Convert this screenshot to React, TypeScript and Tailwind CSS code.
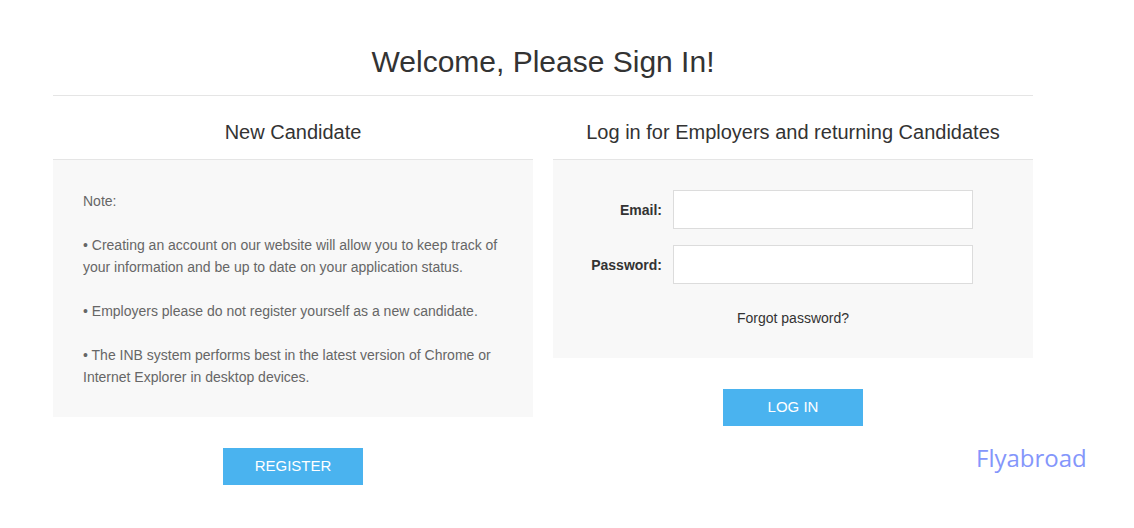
import React from 'react';

const notes = [
  'Note:',
  '• Creating an account on our website will allow you to keep track of your information and be up to date on your application status.',
  '• Employers please do not register yourself as a new candidate.',
  '• The INB system performs best in the latest version of Chrome or Internet Explorer in desktop devices.',
];

const BlueButton: React.FC<{ label: string }> = ({ label }) => (
  <button className="flex h-[37px] w-[140px] items-center justify-center bg-[#4ab3ef] text-[15px] text-white">
    {label}
  </button>
);

export default function App() {
  return (
    <div className="relative min-h-[528px] w-full bg-white font-['Liberation_Sans',Arial,sans-serif] text-[#333]">
      <div className="mx-auto w-[980px] -translate-x-[24px]">
        {/* Title */}
        <div className="border-b border-[#e5e5e5] pt-[44px] pb-[15px] text-center">
          <h1 className="text-[30px] leading-[36px] text-[#333]">Welcome, Please Sign In!</h1>
        </div>

        <div className="flex gap-[20px]">
          {/* New candidate */}
          <div className="flex w-[480px] flex-col">
            <h2 className="border-b border-[#e5e5e5] pt-[24px] pb-[15px] text-center text-[20px] leading-[24px]">
              New Candidate
            </h2>
            <div className="bg-[#f8f8f8] px-[30px] pt-[30px] pb-[29px] text-[14px] leading-[22px] text-[#666]">
              {notes.map((n, i) => (
                <p key={i} className={i < notes.length - 1 ? 'mb-[22px]' : ''}>
                  {n}
                </p>
              ))}
            </div>
            <div className="mt-[31px] flex justify-center">
              <BlueButton label="REGISTER" />
            </div>
          </div>

          {/* Login */}
          <div className="flex w-[480px] flex-col">
            <h2 className="border-b border-[#e5e5e5] pt-[24px] pb-[15px] text-center text-[20px] leading-[24px]">
              Log in for Employers and returning Candidates
            </h2>
            <div className="bg-[#f8f8f8] pt-[30px] pb-[30px]">
              <div className="flex flex-col gap-[16px]">
                <label className="flex items-center">
                  <span className="w-[110px] pr-[1px] pt-[2px] text-right text-[14px] font-bold">Email:</span>
                  <input type="text" className="ml-[10px] h-[39px] w-[300px] border border-[#dcdcdc] bg-white outline-none" />
                </label>
                <label className="flex items-center">
                  <span className="w-[110px] pr-[1px] pt-[2px] text-right text-[14px] font-bold">Password:</span>
                  <input type="password" className="ml-[10px] h-[39px] w-[300px] border border-[#dcdcdc] bg-white outline-none" />
                </label>
              </div>
              <p className="mt-[24px] text-center text-[14px] leading-[20px] text-[#333]">Forgot password?</p>
            </div>
            <div className="mt-[31px] flex justify-center">
              <BlueButton label="LOG IN" />
            </div>
          </div>
        </div>
      </div>

      {/* watermark */}
      <div className="absolute left-[976px] top-[442px] font-['Open_Sans',sans-serif] text-[24px] leading-[32px] text-[#8496fb]">
        Flyabroad
      </div>
    </div>
  );
}
